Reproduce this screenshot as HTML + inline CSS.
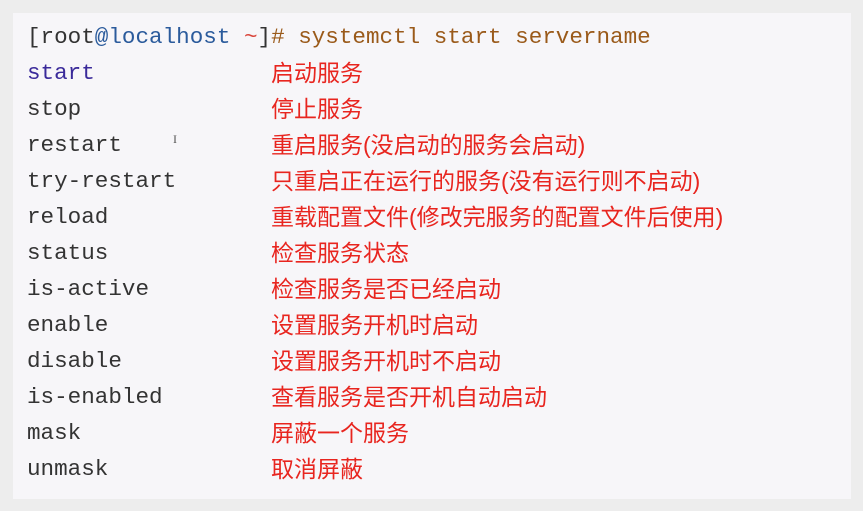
<!DOCTYPE html>
<html><head><meta charset="utf-8"><style>
html,body{margin:0;padding:0;background:#ededed;width:863px;height:511px;overflow:hidden}
.box{position:absolute;left:13px;top:13px;width:838px;height:486px;background:#f7f6f9}
.l{position:absolute;left:27px;height:36px;line-height:36px;font-family:"Liberation Mono",monospace;font-size:22.6px;color:#333;white-space:pre}
.c{left:271px;font-family:"Liberation Sans","Noto Sans CJK SC",sans-serif;font-size:23px;color:#e8251f}
.b{color:#2b5b9c}.o{color:#9a5a1a}.r{color:#d9443a}.p{color:#3a2a9a}
</style></head><body>
<div class="box"></div>
<div class="l" style="top:19px">[root<span class="b">@localhost</span> <span class="r">~</span>]<span class="o"># systemctl start servername</span></div>
<div class="l p" style="top:55px">start</div><div class="l c" style="top:55px">启动服务</div>
<div class="l" style="top:91px">stop</div><div class="l c" style="top:91px">停止服务</div>
<div class="l" style="top:127px">restart</div><div class="l c" style="top:127px">重启服务(没启动的服务会启动)</div>
<div class="l" style="top:163px">try-restart</div><div class="l c" style="top:163px">只重启正在运行的服务(没有运行则不启动)</div>
<div class="l" style="top:199px">reload</div><div class="l c" style="top:199px">重载配置文件(修改完服务的配置文件后使用)</div>
<div class="l" style="top:235px">status</div><div class="l c" style="top:235px">检查服务状态</div>
<div class="l" style="top:271px">is-active</div><div class="l c" style="top:271px">检查服务是否已经启动</div>
<div class="l" style="top:307px">enable</div><div class="l c" style="top:307px">设置服务开机时启动</div>
<div class="l" style="top:343px">disable</div><div class="l c" style="top:343px">设置服务开机时不启动</div>
<div class="l" style="top:379px">is-enabled</div><div class="l c" style="top:379px">查看服务是否开机自动启动</div>
<div class="l" style="top:415px">mask</div><div class="l c" style="top:415px">屏蔽一个服务</div>
<div class="l" style="top:451px">unmask</div><div class="l c" style="top:451px">取消屏蔽</div>
<div style="position:absolute;left:173px;top:132px;font-family:'Liberation Serif',serif;font-size:12px;color:#555">I</div>
</body></html>
